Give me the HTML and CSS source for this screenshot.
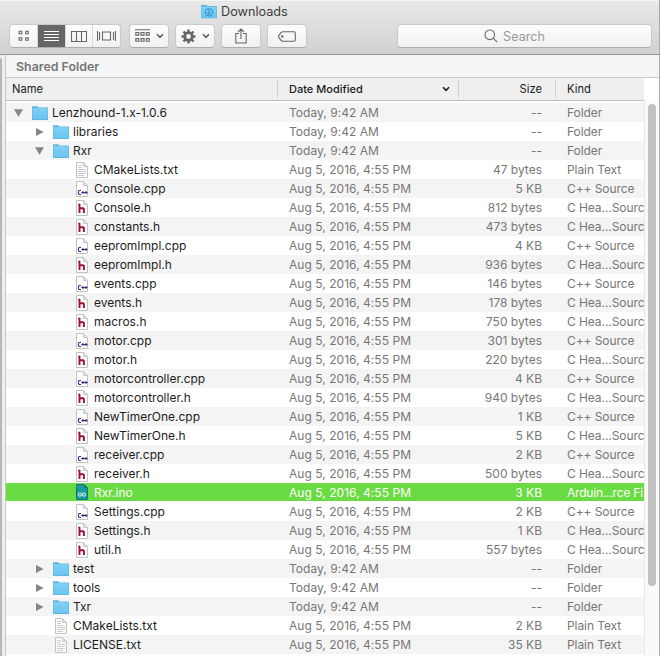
FILE: index.html
```html
<!DOCTYPE html>
<html lang="en">
<head>
<meta charset="utf-8">
<title>Downloads</title>
<link rel="stylesheet" href="styles.css">
</head>
<body>
<svg class="defs" width="0" height="0">
  <defs>
    <linearGradient id="fg" x1="0" y1="0" x2="0" y2="1"><stop offset="0" stop-color="#7dcff5"/><stop offset="1" stop-color="#6bc5f2"/></linearGradient>
    <symbol id="folder" viewBox="0 0 16 14"><path d="M0 14V.9Q0 .3.6.3H5.2L6.6 1.5H15.4Q16 1.5 16 2.1V14Z" fill="#5ab5e0"/><path d="M.5 3H15.5V13H.5Z" fill="url(#fg)"/><path d="M.5 2.8H15.5" stroke="#9bdcf8" stroke-width=".8"/></symbol>
    <symbol id="page" viewBox="0 0 12 16"><path d="M.5.5H7.5L11.5 4.5V15.5H.5Z" fill="#fff" stroke="#c2c2c2"/><path d="M7.5.5V4.5H11.5Z" fill="#e4e4e4" stroke="#c8c8c8"/></symbol>
    <symbol id="txt" viewBox="0 0 12 16"><use href="#page"/><path d="M2 3.5H6M2 5.5H6M2 7.5H10M2 9.5H10M2 11.5H10M2 13.5H8" stroke="#cdcdcd" fill="none"/></symbol>
    <symbol id="cpp" viewBox="0 0 12 16"><use href="#page"/><path d="M5 9.5H3.2L2.5 10.2V12.8L3.2 13.5H5M5.2 11.5H11.6M7 10V13M10 10V13" stroke="#402a86" stroke-width="1.1" fill="none"/></symbol>
    <symbol id="h" viewBox="0 0 12 16"><use href="#page"/><path d="M3.5 4V13M2.2 4.6H4M4 8.2H7L7.9 9V13" stroke="#a30d35" stroke-width="1.9" fill="none"/></symbol>
    <symbol id="ino" viewBox="0 0 12 16"><path d="M.5.5H8L11.5 4V15.5H.5Z" fill="#1a9a9d" stroke="#147679"/><path d="M8 .5V4H11.5Z" fill="#127073"/><circle cx="3.9" cy="10.6" r="1.6" fill="none" stroke="#e8ffff"/><circle cx="7.9" cy="10.6" r="1.6" fill="none" stroke="#e8ffff"/></symbol>
    <symbol id="open" viewBox="0 0 9 8"><path d="M0 .3H9L4.5 7.8Z" fill="#868686"/></symbol>
    <symbol id="closed" viewBox="0 0 9 8"><path d="M1 0V8L8.6 4Z" fill="#868686"/></symbol>
    <symbol id="chev" viewBox="0 0 8 6"><path d="M1 1.2L4 4.3L7 1.2" fill="none" stroke="currentColor" stroke-width="1.5"/></symbol>
  </defs>
</svg>
<div class="window">
  <header class="toolbar">
    <div class="title">
      <svg width="16" height="15" viewBox="0 0 16 14"><use href="#folder" width="16" height="14"/><circle cx="8" cy="7.8" r="3.7" fill="none" stroke="#278fc9"/><path d="M8 5.5V9.5M6.2 8L8 9.8L9.8 8" fill="none" stroke="#278fc9"/></svg>
      <span>Downloads</span>
    </div>
    <div class="tools">
      <div class="segments">
        <span class="seg s1"><svg width="12" height="12" viewBox="0 0 12 12"><path d="M1.2 1.2h2.6v2.6H1.2zM7.7 1.2h2.6v2.6H7.7zM1.2 7.7h2.6v2.6H1.2zM7.7 7.7h2.6v2.6H7.7z"/></svg></span>
        <span class="seg s2"><svg width="15" height="12" viewBox="0 0 15 12"><path d="M0 1.5H15M0 4.5H15M0 7.5H15M0 10.5H15"/></svg></span>
        <span class="seg s3"><svg width="16" height="11" viewBox="0 0 16 11"><path d="M.5.5H15.5V10.5H.5ZM5.5.5V10.5M10.5.5V10.5"/></svg></span>
        <span class="seg s4"><svg width="19" height="12" viewBox="0 0 19 12"><path d="M.5 1V11M2.5 2V10M5.5 2H13.5V10H5.5ZM16.5 2V10M18.5 1V11"/></svg></span>
      </div>
      <span class="btn arrange"><svg width="15" height="14" viewBox="0 0 15 14"><path d="M0 .7H15M.8 3.5h3v2.6h-3zM6 3.5h3v2.6H6zM11.2 3.5h3v2.6h-3zM.8 9.6h3v2.6h-3zM6 9.6h3v2.6H6zM11.2 9.6h3v2.6h-3z"/></svg><svg class="chev" width="8" height="6"><use href="#chev"/></svg></span>
      <span class="btn action"><svg width="15" height="15" viewBox="0 0 15 15"><circle cx="7.5" cy="7.5" r="3.8" stroke-width="2.8"/><path d="M7.5.5V3M7.5 12V14.5M.5 7.5H3M12 7.5H14.5M2.5 2.5L4.3 4.3M10.7 10.7L12.5 12.5M12.5 2.5L10.7 4.3M4.3 10.7L2.5 12.5" stroke-width="2.4"/></svg><svg class="chev" width="8" height="6"><use href="#chev"/></svg></span>
      <span class="btn share"><svg width="12" height="16" viewBox="0 0 12 16"><path d="M4 5.5H.8V15H11.2V5.5H8M6 11V1.2M3 4L6 1L9 4"/></svg></span>
      <span class="btn tag"><svg width="18" height="11" viewBox="0 0 18 11"><path d="M5.2.7H15.7Q17.3.7 17.3 2.2V8.8Q17.3 10.3 15.7 10.3H5.2Q3.8 10.3 3 9.3L.8 6.4Q.2 5.5.8 4.6L3 1.7Q3.8.7 5.2.7Z"/><circle cx="4.2" cy="5.5" r=".7"/></svg></span>
      <span class="search"><svg width="14" height="14" viewBox="0 0 14 14"><circle cx="5.8" cy="5.8" r="4.8"/><path d="M9.3 9.3L13.2 13.2"/></svg><span>Search</span></span>
    </div>
  </header>
  <div class="body">
    <div class="side"><div class="grip"></div></div>
    <main class="pane">
      <div class="path">Shared Folder</div>
      <div class="cols">
        <span class="cn">Name</span>
        <span class="cd"><span>Date Modified</span><svg width="8" height="6"><use href="#chev"/></svg></span>
        <span class="cs">Size</span>
        <span class="ck">Kind</span>
      </div>
      <div class="content">
        <div class="list">
          <div class="row d0"><span class="name"><svg class="tri"><use href="#open"/></svg><svg class="fold"><use href="#folder"/></svg>Lenzhound-1.x-1.0.6</span><span class="date">Today, 9:42 AM</span><span class="size">--</span><span class="kind">Folder</span></div>
          <div class="row d1"><span class="name"><svg class="tri"><use href="#closed"/></svg><svg class="fold"><use href="#folder"/></svg>libraries</span><span class="date">Today, 9:42 AM</span><span class="size">--</span><span class="kind">Folder</span></div>
          <div class="row d1"><span class="name"><svg class="tri"><use href="#open"/></svg><svg class="fold"><use href="#folder"/></svg>Rxr</span><span class="date">Today, 9:42 AM</span><span class="size">--</span><span class="kind">Folder</span></div>
          <div class="row d2"><span class="name"><svg class="file"><use href="#txt"/></svg>CMakeLists.txt</span><span class="date">Aug 5, 2016, 4:55 PM</span><span class="size">47 bytes</span><span class="kind">Plain Text</span></div>
          <div class="row d2"><span class="name"><svg class="file"><use href="#cpp"/></svg>Console.cpp</span><span class="date">Aug 5, 2016, 4:55 PM</span><span class="size">5 KB</span><span class="kind">C++ Source</span></div>
          <div class="row d2"><span class="name"><svg class="file"><use href="#h"/></svg>Console.h</span><span class="date">Aug 5, 2016, 4:55 PM</span><span class="size">812 bytes</span><span class="kind">C Hea...Sourc</span></div>
          <div class="row d2"><span class="name"><svg class="file"><use href="#h"/></svg>constants.h</span><span class="date">Aug 5, 2016, 4:55 PM</span><span class="size">473 bytes</span><span class="kind">C Hea...Sourc</span></div>
          <div class="row d2"><span class="name"><svg class="file"><use href="#cpp"/></svg>eepromImpl.cpp</span><span class="date">Aug 5, 2016, 4:55 PM</span><span class="size">4 KB</span><span class="kind">C++ Source</span></div>
          <div class="row d2"><span class="name"><svg class="file"><use href="#h"/></svg>eepromImpl.h</span><span class="date">Aug 5, 2016, 4:55 PM</span><span class="size">936 bytes</span><span class="kind">C Hea...Sourc</span></div>
          <div class="row d2"><span class="name"><svg class="file"><use href="#cpp"/></svg>events.cpp</span><span class="date">Aug 5, 2016, 4:55 PM</span><span class="size">146 bytes</span><span class="kind">C++ Source</span></div>
          <div class="row d2"><span class="name"><svg class="file"><use href="#h"/></svg>events.h</span><span class="date">Aug 5, 2016, 4:55 PM</span><span class="size">178 bytes</span><span class="kind">C Hea...Sourc</span></div>
          <div class="row d2"><span class="name"><svg class="file"><use href="#h"/></svg>macros.h</span><span class="date">Aug 5, 2016, 4:55 PM</span><span class="size">750 bytes</span><span class="kind">C Hea...Sourc</span></div>
          <div class="row d2"><span class="name"><svg class="file"><use href="#cpp"/></svg>motor.cpp</span><span class="date">Aug 5, 2016, 4:55 PM</span><span class="size">301 bytes</span><span class="kind">C++ Source</span></div>
          <div class="row d2"><span class="name"><svg class="file"><use href="#h"/></svg>motor.h</span><span class="date">Aug 5, 2016, 4:55 PM</span><span class="size">220 bytes</span><span class="kind">C Hea...Sourc</span></div>
          <div class="row d2"><span class="name"><svg class="file"><use href="#cpp"/></svg>motorcontroller.cpp</span><span class="date">Aug 5, 2016, 4:55 PM</span><span class="size">4 KB</span><span class="kind">C++ Source</span></div>
          <div class="row d2"><span class="name"><svg class="file"><use href="#h"/></svg>motorcontroller.h</span><span class="date">Aug 5, 2016, 4:55 PM</span><span class="size">940 bytes</span><span class="kind">C Hea...Sourc</span></div>
          <div class="row d2"><span class="name"><svg class="file"><use href="#cpp"/></svg>NewTimerOne.cpp</span><span class="date">Aug 5, 2016, 4:55 PM</span><span class="size">1 KB</span><span class="kind">C++ Source</span></div>
          <div class="row d2"><span class="name"><svg class="file"><use href="#h"/></svg>NewTimerOne.h</span><span class="date">Aug 5, 2016, 4:55 PM</span><span class="size">5 KB</span><span class="kind">C Hea...Sourc</span></div>
          <div class="row d2"><span class="name"><svg class="file"><use href="#cpp"/></svg>receiver.cpp</span><span class="date">Aug 5, 2016, 4:55 PM</span><span class="size">2 KB</span><span class="kind">C++ Source</span></div>
          <div class="row d2"><span class="name"><svg class="file"><use href="#h"/></svg>receiver.h</span><span class="date">Aug 5, 2016, 4:55 PM</span><span class="size">500 bytes</span><span class="kind">C Hea...Sourc</span></div>
          <div class="row d2 selected"><span class="name"><svg class="file"><use href="#ino"/></svg>Rxr.ino</span><span class="date">Aug 5, 2016, 4:55 PM</span><span class="size">3 KB</span><span class="kind">Arduin...rce Fi</span></div>
          <div class="row d2"><span class="name"><svg class="file"><use href="#cpp"/></svg>Settings.cpp</span><span class="date">Aug 5, 2016, 4:55 PM</span><span class="size">2 KB</span><span class="kind">C++ Source</span></div>
          <div class="row d2"><span class="name"><svg class="file"><use href="#h"/></svg>Settings.h</span><span class="date">Aug 5, 2016, 4:55 PM</span><span class="size">1 KB</span><span class="kind">C Hea...Sourc</span></div>
          <div class="row d2"><span class="name"><svg class="file"><use href="#h"/></svg>util.h</span><span class="date">Aug 5, 2016, 4:55 PM</span><span class="size">557 bytes</span><span class="kind">C Hea...Sourc</span></div>
          <div class="row d1"><span class="name"><svg class="tri"><use href="#closed"/></svg><svg class="fold"><use href="#folder"/></svg>test</span><span class="date">Today, 9:42 AM</span><span class="size">--</span><span class="kind">Folder</span></div>
          <div class="row d1"><span class="name"><svg class="tri"><use href="#closed"/></svg><svg class="fold"><use href="#folder"/></svg>tools</span><span class="date">Today, 9:42 AM</span><span class="size">--</span><span class="kind">Folder</span></div>
          <div class="row d1"><span class="name"><svg class="tri"><use href="#closed"/></svg><svg class="fold"><use href="#folder"/></svg>Txr</span><span class="date">Today, 9:42 AM</span><span class="size">--</span><span class="kind">Folder</span></div>
          <div class="row d1 leaf"><span class="name"><svg class="file"><use href="#txt"/></svg>CMakeLists.txt</span><span class="date">Aug 5, 2016, 4:55 PM</span><span class="size">2 KB</span><span class="kind">Plain Text</span></div>
          <div class="row d1 leaf"><span class="name"><svg class="file"><use href="#txt"/></svg>LICENSE.txt</span><span class="date">Aug 5, 2016, 4:55 PM</span><span class="size">35 KB</span><span class="kind">Plain Text</span></div>
        </div>
        <div class="scroll"><div class="thumb"></div></div>
      </div>
    </main>
  </div>
</div>
</body>
</html>
```

FILE: styles.css
```css
* { box-sizing: border-box; }
body { margin: 0; background: #fff; font-family: Inter, "Liberation Sans", sans-serif; font-size: 12px; color: #1c1c1c; }
svg { display: block; flex: none; }
.defs { position: absolute; }
.window { width: 660px; height: 656px; overflow: hidden; display: flex; flex-direction: column; border-right: 1px solid #a9a9a9; }
.toolbar { height: 55px; flex: none; border-top: 1px solid #f5f5f5; border-bottom: 1px solid #979797; background: linear-gradient(#e9e9e9, #d1d1d1); }
.title { height: 23px; display: flex; align-items: center; padding: 0 0 2px 201px; gap: 4px; font-size: 12.7px; color: #3d3d3d; }
.tools { display: flex; height: 24px; }
.segments, .btn, .search { background: linear-gradient(#fdfdfd, #f1f1f1); border: 1px solid #cacaca; border-bottom-color: #adadad; border-radius: 4px; height: 24px; }
.segments { display: flex; width: 112px; margin-left: 9px; overflow: hidden; }
.seg { display: flex; align-items: center; justify-content: center; border-right: 1px solid #d8d8d8; }
.s1 { width: 28px; }
.s2 { width: 28px; background: #666; }
.s3 { width: 27px; }
.s4 { flex: 1; border: 0; }
.tools svg { fill: none; stroke: #666; stroke-width: 1.1; }
.tools .s2 svg { stroke: #fff; }
.btn { display: flex; align-items: center; justify-content: center; width: 40px; gap: 6px; color: #5c5c5c; }
.arrange { margin-left: 8px; }
.action { margin-left: 6px; }
.share { margin-left: 6px; }
.tag { margin-left: 6px; }
.search { display: flex; align-items: center; justify-content: center; gap: 5px; width: 255px; padding-right: 20px; margin-left: 90px; color: #999; font-size: 12.6px; }
.body { flex: 1; display: flex; min-height: 0; }
.side { width: 6px; flex: none; background: #f0efef; border-right: 1px solid #c9c9c9; padding-top: 3px; }
.grip { width: 2px; height: 100%; background: #b9b6b6; border-top-right-radius: 2px; }
.pane { flex: 1; display: flex; flex-direction: column; min-width: 0; }
.path { height: 23px; flex: none; background: #f5f5f5; border-bottom: 1px solid #c8c8c8; padding-left: 10px; line-height: 23px; font-weight: 600; font-size: 12.4px; color: #777; }
.cols { height: 23px; width: 638px; flex: none; display: flex; align-items: center; background: #efefef; border-bottom: 1px solid #bdbdbd; font-size: 11.2px; }
.cols span { height: 18px; line-height: 18px; }
.cn { width: 272px; padding-left: 6px; border-right: 1px solid #d2d2d2; }
.cd { width: 181px; padding: 0 8px 0 11px; border-right: 1px solid #d2d2d2; display: flex; justify-content: space-between; align-items: center; font-size: 11px; font-weight: 500; }
.cs { width: 97px; padding-right: 13px; text-align: right; border-right: 1px solid #d2d2d2; }
.ck { padding-left: 11px; }
.content { flex: 1; display: flex; min-height: 0; overflow: hidden; }
.list { width: 638px; padding-top: 2px; }
.row { display: flex; height: 19px; line-height: 19px; color: #777; }
.row:nth-child(odd) { background: #f4f4f4; }
.row.selected { background: #6bdb43; color: #fff; border-bottom: 1px solid #fff; }
.name { width: 272px; display: flex; align-items: center; color: #1c1c1c; white-space: nowrap; }
.selected .name { color: #fff; }
.tri { width: 9px; height: 8px; margin-right: 9px; }
.fold { width: 16px; height: 14px; margin-right: 4px; }
.file { width: 12px; height: 16px; margin-right: 6px; }
.d0 .name { padding-left: 8px; }
.d1 .name { padding-left: 29px; }
.d2 .name { padding-left: 70px; }
.leaf .name { padding-left: 49px; }
.date { width: 181px; padding-left: 11px; letter-spacing: .04px; }
.size { width: 83px; text-align: right; }
.kind { width: 102px; padding-left: 25px; overflow: hidden; white-space: nowrap; letter-spacing: -.08px; }
.selected .kind { letter-spacing: -.2px; }
.scroll { width: 15px; flex: none; background: #fafafa; border-left: 1px solid #e8e8e8; padding: 3px 0 0 3px; }
.thumb { width: 8px; height: 482px; border-radius: 4px; background: #c1c1c1; }
```
